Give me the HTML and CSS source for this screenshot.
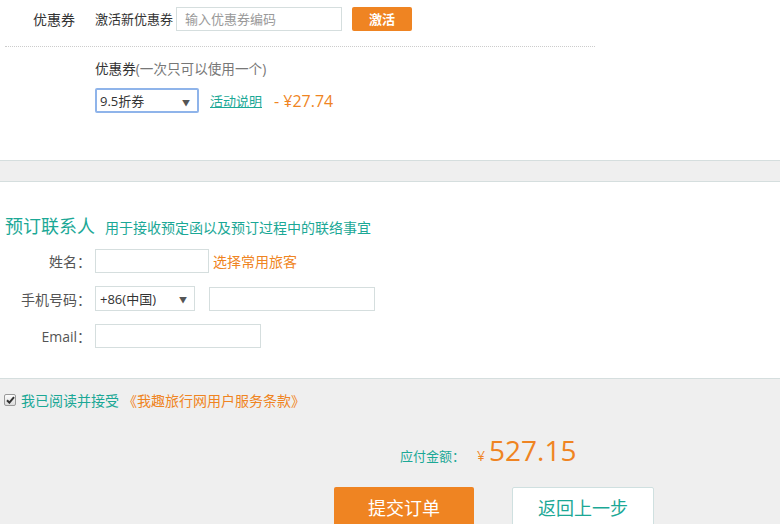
FILE: index.html
```html
<!DOCTYPE html>
<html lang="zh-CN">
<head>
  <meta charset="UTF-8">
  <title>填写订单</title>
  <link rel="stylesheet" href="styles.css">
</head>
<body>

  <!-- 优惠券 -->
  <div class="coupon">
    <div class="coupon-top">
      <span class="coupon-label">优惠券</span>
      <span class="coupon-new">激活新优惠券</span>
      <input type="text" class="coupon-code" placeholder="输入优惠券编码">
      <button class="btn-activate">激活</button>
    </div>
    <div class="coupon-line"></div>
    <div class="coupon-pick">
      <p class="coupon-tip">优惠券<span>(一次只可以使用一个)</span></p>
      <div class="coupon-row">
        <div class="select select-focus">
          <span>9.5折券</span>
          <i class="arrow">▼</i>
        </div>
        <a href="#" class="rule-link">活动说明</a>
        <span class="discount">- ¥27.74</span>
      </div>
    </div>
  </div>

  <div class="band"></div>

  <!-- 预订联系人 -->
  <div class="contact">
    <h3 class="contact-title">预订联系人<small>用于接收预定函以及预订过程中的联络事宜</small></h3>
    <div class="form-row">
      <label class="form-label">姓名<span class="colon">：</span></label>
      <input type="text" class="field field-name">
      <a href="#" class="pick-guest">选择常用旅客</a>
    </div>
    <div class="form-row">
      <label class="form-label">手机号码<span class="colon">：</span></label>
      <div class="select select-phone">
        <span>+86(中国)</span>
        <i class="arrow">▼</i>
      </div>
      <input type="text" class="field field-phone">
    </div>
    <div class="form-row">
      <label class="form-label">Email<span class="colon">：</span></label>
      <input type="text" class="field field-email">
    </div>
  </div>

  <!-- 提交 -->
  <div class="submit">
    <div class="agree">
      <span class="check">
        <svg width="9" height="8" viewBox="0 0 9 8"><path d="M1 4.2 L3.4 6.6 L8 1.2" fill="none" stroke="#333" stroke-width="2"/></svg>
      </span>
      <span class="agree-text">我已阅读并接受</span>
      <a href="#" class="terms">《我趣旅行网用户服务条款》</a>
    </div>
    <div class="total">
      <span class="total-label">应付金额<span class="colon">：</span></span>
      <span class="yen">¥</span>
      <span class="amount">527.15</span>
    </div>
    <div class="actions">
      <button class="btn-submit">提交订单</button>
      <button class="btn-back">返回上一步</button>
    </div>
  </div>

</body>
</html>
```

FILE: styles.css
```css
/* 基础 */
* {
  margin: 0;
  padding: 0;
  box-sizing: border-box;
}
body {
  font-family: "Open Sans", "Noto Sans CJK SC", sans-serif;
  font-size: 14px;
  color: #333;
  background: #fff;
  width: 780px;
  height: 524px;
  overflow: hidden;
}
a {
  text-decoration: none;
}
input, button {
  font-family: inherit;
  outline: none;
}
/* 全角冒号居中显示 */
.colon {
  font-family: "Noto Sans CJK TC", sans-serif;
}

/* ----- 优惠券 ----- */
.coupon {
  height: 160px;
  padding-top: 6px;
}
.coupon-top {
  display: flex;
  align-items: center;
  height: 25px;
}
.coupon-label {
  width: 95px;
  padding-left: 33px;
  font-size: 14px;
}
.coupon-new {
  font-size: 13px;
}
.coupon-code {
  width: 166px;
  height: 24px;
  margin-left: 3px;
  border: 1px solid #d5dede;
  padding: 0 8px;
  font-size: 13px;
  color: #333;
}
.coupon-code::placeholder {
  color: #999;
}
.btn-activate {
  margin-left: 10px;
  width: 60px;
  height: 24px;
  border: none;
  border-radius: 2px;
  background: #ef8422;
  color: #fff;
  font-size: 13px;
  font-weight: bold;
}
.coupon-line {
  width: 590px;
  margin: 15px 0 0 5px;
  border-top: 1px dotted #ccc;
}
.coupon-pick {
  padding-left: 95px;
}
.coupon-tip {
  margin-top: 12px;
  font-size: 13.6px;
  line-height: 20px;
}
.coupon-tip span {
  color: #777;
}
.coupon-row {
  display: flex;
  align-items: center;
  margin-top: 9px;
}
.select {
  position: relative;
  display: flex;
  align-items: center;
  height: 25px;
  border: 1px solid #d5dede;
  padding-left: 4px;
  font-size: 13px;
  background: #fff;
}
.select .arrow {
  position: absolute;
  right: 7px;
  top: 7px;
  font-style: normal;
  font-size: 8px;
  color: #555;
}
.select-focus {
  width: 104px;
  border: 2px solid #8fb4ea;
  border-radius: 2px;
  padding-left: 3px;
}
.rule-link {
  margin-left: 11px;
  color: #1ba896;
  text-decoration: underline;
  font-size: 13px;
}
.discount {
  margin-left: 12px;
  color: #ef8422;
  font-size: 16px;
}

/* ----- 分隔条 ----- */
.band {
  height: 22px;
  background: #efefef;
  border-top: 1px solid #d5dede;
  border-bottom: 1px solid #d5dede;
}

/* ----- 联系人 ----- */
.contact {
  height: 196px;
  padding-top: 32px;
}
.contact-title {
  display: flex;
  align-items: baseline;
  padding-left: 5px;
  font-size: 18px;
  font-weight: normal;
  color: #1ba896;
  line-height: 24px;
}
.contact-title small {
  margin-left: 10px;
  font-size: 14px;
}
.form-row {
  display: flex;
  align-items: center;
  margin-top: 9px;
}
.form-row + .form-row {
  margin-top: 13px;
}
.form-label {
  width: 95px;
  padding-right: 4px;
  text-align: right;
  color: #555;
}
.field {
  height: 24px;
  border: 1px solid #d5dede;
  padding: 0 6px;
}
.field-name {
  width: 114px;
}
.pick-guest {
  margin-left: 4px;
  color: #ef8422;
}
.select-phone {
  width: 100px;
}
.field-phone {
  width: 166px;
  margin-left: 14px;
}
.field-email {
  width: 166px;
}

/* ----- 提交 ----- */
.submit {
  height: 146px;
  background: #efefef;
  border-top: 1px solid #d5dede;
}
.agree {
  display: flex;
  align-items: center;
  padding: 11px 0 0 4px;
}
.check {
  display: flex;
  align-items: center;
  justify-content: center;
  width: 12px;
  height: 12px;
  border: 1px solid #999;
  border-radius: 2px;
  background: linear-gradient(#fcfcfc, #dcdcdc);
}
.agree-text {
  margin-left: 5px;
  color: #1ba896;
}
.terms {
  margin-left: 4px;
  color: #ef8422;
}
.total {
  display: flex;
  align-items: baseline;
  margin-top: 22px;
  padding-left: 400px;
}
.total-label {
  font-size: 13px;
  color: #1ba896;
}
.yen {
  margin-left: 12px;
  color: #ef8422;
  font-size: 14px;
}
.amount {
  margin-left: 4px;
  color: #ef8422;
  font-size: 28px;
  line-height: 36px;
}
.actions {
  display: flex;
  gap: 38px;
  margin-top: 19px;
  padding-left: 334px;
}
.btn-submit {
  width: 140px;
  height: 40px;
  border: none;
  border-radius: 2px;
  background: #ef8422;
  color: #fff;
  font-size: 18px;
}
.btn-back {
  width: 142px;
  height: 40px;
  border: 1px solid #cfe0e0;
  border-radius: 2px;
  background: #fff;
  color: #1ba896;
  font-size: 18px;
}
```
